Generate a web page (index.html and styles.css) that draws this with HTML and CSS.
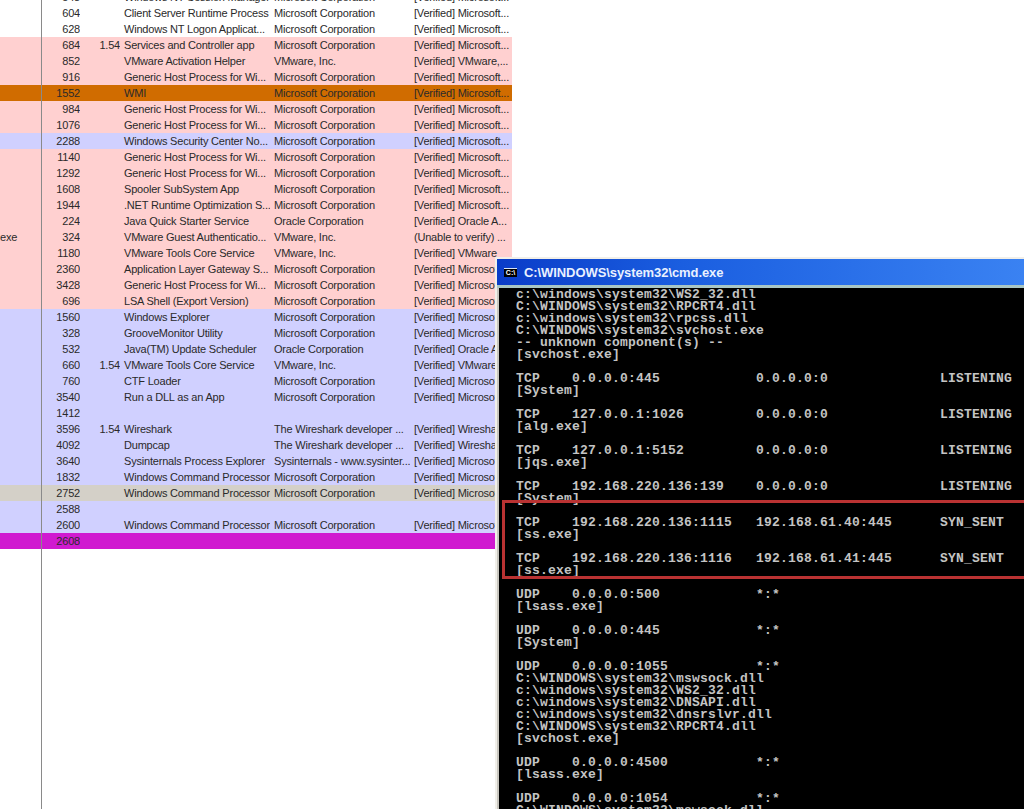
FILE: index.html
```html
<!DOCTYPE html>
<html lang="en">
<head>
<meta charset="utf-8">
<title>Process list and cmd.exe</title>
<link rel="stylesheet" href="styles.css">
</head>
<body>
<main class="desktop">
  <div class="divider"></div>
  <section class="plist">
    <div class="row"><span></span><span class="num">548</span><span class="cpu"></span><span class="cell">Windows NT Session Manager</span><span class="cell">Microsoft Corporation</span><span class="cell">[Verified] Microsoft...</span></div>
    <div class="row"><span></span><span class="num">604</span><span class="cpu"></span><span class="cell">Client Server Runtime Process</span><span class="cell">Microsoft Corporation</span><span class="cell">[Verified] Microsoft...</span></div>
    <div class="row"><span></span><span class="num">628</span><span class="cpu"></span><span class="cell">Windows NT Logon Applicat...</span><span class="cell">Microsoft Corporation</span><span class="cell">[Verified] Microsoft...</span></div>
    <div class="row pink"><span></span><span class="num">684</span><span class="cpu">1.54</span><span class="cell">Services and Controller app</span><span class="cell">Microsoft Corporation</span><span class="cell">[Verified] Microsoft...</span></div>
    <div class="row pink"><span></span><span class="num">852</span><span class="cpu"></span><span class="cell">VMware Activation Helper</span><span class="cell">VMware, Inc.</span><span class="cell">[Verified] VMware,...</span></div>
    <div class="row pink"><span></span><span class="num">916</span><span class="cpu"></span><span class="cell">Generic Host Process for Wi...</span><span class="cell">Microsoft Corporation</span><span class="cell">[Verified] Microsoft...</span></div>
    <div class="row orange"><span></span><span class="num">1552</span><span class="cpu"></span><span class="cell">WMI</span><span class="cell">Microsoft Corporation</span><span class="cell">[Verified] Microsoft...</span></div>
    <div class="row pink"><span></span><span class="num">984</span><span class="cpu"></span><span class="cell">Generic Host Process for Wi...</span><span class="cell">Microsoft Corporation</span><span class="cell">[Verified] Microsoft...</span></div>
    <div class="row pink"><span></span><span class="num">1076</span><span class="cpu"></span><span class="cell">Generic Host Process for Wi...</span><span class="cell">Microsoft Corporation</span><span class="cell">[Verified] Microsoft...</span></div>
    <div class="row blue"><span></span><span class="num">2288</span><span class="cpu"></span><span class="cell">Windows Security Center No...</span><span class="cell">Microsoft Corporation</span><span class="cell">[Verified] Microsoft...</span></div>
    <div class="row pink"><span></span><span class="num">1140</span><span class="cpu"></span><span class="cell">Generic Host Process for Wi...</span><span class="cell">Microsoft Corporation</span><span class="cell">[Verified] Microsoft...</span></div>
    <div class="row pink"><span></span><span class="num">1292</span><span class="cpu"></span><span class="cell">Generic Host Process for Wi...</span><span class="cell">Microsoft Corporation</span><span class="cell">[Verified] Microsoft...</span></div>
    <div class="row pink"><span></span><span class="num">1608</span><span class="cpu"></span><span class="cell">Spooler SubSystem App</span><span class="cell">Microsoft Corporation</span><span class="cell">[Verified] Microsoft...</span></div>
    <div class="row pink"><span></span><span class="num">1944</span><span class="cpu"></span><span class="cell">.NET Runtime Optimization S...</span><span class="cell">Microsoft Corporation</span><span class="cell">[Verified] Microsoft...</span></div>
    <div class="row pink"><span></span><span class="num">224</span><span class="cpu"></span><span class="cell">Java Quick Starter Service</span><span class="cell">Oracle Corporation</span><span class="cell">[Verified] Oracle A...</span></div>
    <div class="row pink"><span class="name">exe</span><span class="num">324</span><span class="cpu"></span><span class="cell">VMware Guest Authenticatio...</span><span class="cell">VMware, Inc.</span><span class="cell">(Unable to verify) ...</span></div>
    <div class="row pink"><span></span><span class="num">1180</span><span class="cpu"></span><span class="cell">VMware Tools Core Service</span><span class="cell">VMware, Inc.</span><span class="cell">[Verified] VMware</span></div>
    <div class="row pink"><span></span><span class="num">2360</span><span class="cpu"></span><span class="cell">Application Layer Gateway S...</span><span class="cell">Microsoft Corporation</span><span class="cell">[Verified] Microsoft...</span></div>
    <div class="row pink"><span></span><span class="num">3428</span><span class="cpu"></span><span class="cell">Generic Host Process for Wi...</span><span class="cell">Microsoft Corporation</span><span class="cell">[Verified] Microsoft...</span></div>
    <div class="row pink"><span></span><span class="num">696</span><span class="cpu"></span><span class="cell">LSA Shell (Export Version)</span><span class="cell">Microsoft Corporation</span><span class="cell">[Verified] Microsoft...</span></div>
    <div class="row blue"><span></span><span class="num">1560</span><span class="cpu"></span><span class="cell">Windows Explorer</span><span class="cell">Microsoft Corporation</span><span class="cell">[Verified] Microsoft...</span></div>
    <div class="row blue"><span></span><span class="num">328</span><span class="cpu"></span><span class="cell">GrooveMonitor Utility</span><span class="cell">Microsoft Corporation</span><span class="cell">[Verified] Microsoft...</span></div>
    <div class="row blue"><span></span><span class="num">532</span><span class="cpu"></span><span class="cell">Java(TM) Update Scheduler</span><span class="cell">Oracle Corporation</span><span class="cell">[Verified] Oracle A...</span></div>
    <div class="row blue"><span></span><span class="num">660</span><span class="cpu">1.54</span><span class="cell">VMware Tools Core Service</span><span class="cell">VMware, Inc.</span><span class="cell">[Verified] VMware</span></div>
    <div class="row blue"><span></span><span class="num">760</span><span class="cpu"></span><span class="cell">CTF Loader</span><span class="cell">Microsoft Corporation</span><span class="cell">[Verified] Microsoft...</span></div>
    <div class="row blue"><span></span><span class="num">3540</span><span class="cpu"></span><span class="cell">Run a DLL as an App</span><span class="cell">Microsoft Corporation</span><span class="cell">[Verified] Microsoft...</span></div>
    <div class="row blue"><span></span><span class="num">1412</span><span class="cpu"></span><span class="cell"></span><span class="cell"></span><span class="cell"></span></div>
    <div class="row blue"><span></span><span class="num">3596</span><span class="cpu">1.54</span><span class="cell">Wireshark</span><span class="cell">The Wireshark developer ...</span><span class="cell">[Verified] Wireshark</span></div>
    <div class="row blue"><span></span><span class="num">4092</span><span class="cpu"></span><span class="cell">Dumpcap</span><span class="cell">The Wireshark developer ...</span><span class="cell">[Verified] Wireshark</span></div>
    <div class="row blue"><span></span><span class="num">3640</span><span class="cpu"></span><span class="cell">Sysinternals Process Explorer</span><span class="cell">Sysinternals - www.sysinter...</span><span class="cell">[Verified] Microsoft...</span></div>
    <div class="row blue"><span></span><span class="num">1832</span><span class="cpu"></span><span class="cell">Windows Command Processor</span><span class="cell">Microsoft Corporation</span><span class="cell">[Verified] Microsoft...</span></div>
    <div class="row grey"><span></span><span class="num">2752</span><span class="cpu"></span><span class="cell">Windows Command Processor</span><span class="cell">Microsoft Corporation</span><span class="cell">[Verified] Microsoft...</span></div>
    <div class="row blue"><span></span><span class="num">2588</span><span class="cpu"></span><span class="cell"></span><span class="cell"></span><span class="cell"></span></div>
    <div class="row blue"><span></span><span class="num">2600</span><span class="cpu"></span><span class="cell">Windows Command Processor</span><span class="cell">Microsoft Corporation</span><span class="cell">[Verified] Microsoft...</span></div>
    <div class="row magenta"><span></span><span class="num">2608</span><span class="cpu"></span><span class="cell"></span><span class="cell"></span><span class="cell"></span></div>
  </section>

  <section class="cmd">
    <header class="cmd-title">
      <span class="cmd-icon">C:\</span>
      <span class="cmd-name">C:\WINDOWS\system32\cmd.exe</span>
    </header>
    <pre class="cmd-body">c:\windows\system32\WS2_32.dll
C:\WINDOWS\system32\RPCRT4.dll
c:\windows\system32\rpcss.dll
C:\WINDOWS\system32\svchost.exe
-- unknown component(s) --
[svchost.exe]

TCP    0.0.0.0:445            0.0.0.0:0              LISTENING
[System]

TCP    127.0.0.1:1026         0.0.0.0:0              LISTENING
[alg.exe]

TCP    127.0.0.1:5152         0.0.0.0:0              LISTENING
[jqs.exe]

TCP    192.168.220.136:139    0.0.0.0:0              LISTENING
[System]

TCP    192.168.220.136:1115   192.168.61.40:445      SYN_SENT
[ss.exe]

TCP    192.168.220.136:1116   192.168.61.41:445      SYN_SENT
[ss.exe]

UDP    0.0.0.0:500            *:*
[lsass.exe]

UDP    0.0.0.0:445            *:*
[System]

UDP    0.0.0.0:1055           *:*
C:\WINDOWS\system32\mswsock.dll
c:\windows\system32\WS2_32.dll
c:\windows\system32\DNSAPI.dll
c:\windows\system32\dnsrslvr.dll
C:\WINDOWS\system32\RPCRT4.dll
[svchost.exe]

UDP    0.0.0.0:4500           *:*
[lsass.exe]

UDP    0.0.0.0:1054           *:*
C:\WINDOWS\system32\mswsock.dll</pre>
    <div class="callout"></div>
  </section>
</main>
</body>
</html>
```
FILE: styles.css
```css
html, body {
  margin: 0;
  height: 100%;
  background: #fff;
  overflow: hidden;
}

.desktop {
  position: relative;
  height: 809px;
  overflow: hidden;
  font-family: "Liberation Sans", Arial, sans-serif;
}

.divider {
  position: absolute;
  left: 41px;
  top: 0;
  bottom: 0;
  width: 1px;
  background: #8a8a8a;
}

.plist {
  width: 512px;
  margin-top: -11px;
}

.row {
  display: grid;
  grid-template-columns: 41px 39px 40px 150px 140px 102px;
  height: 16px;
  line-height: 16px;
  font-size: 11px;
  letter-spacing: -0.2px;
  color: #2a2a2a;
  white-space: nowrap;
}

.row > span {
  overflow: hidden;
}

.row .num,
.row .cpu {
  text-align: right;
}

.row .cell {
  padding-left: 4px;
}

.pink { background: #ffd0d0; }
.blue { background: #d0d0ff; }
.orange { background: #d06c00; }
.grey { background: #d4d0c8; }
.magenta { background: #d01ad0; }

.cmd {
  position: absolute;
  left: 495px;
  top: 257px;
  right: 0;
  bottom: 0;
  overflow: hidden;
  background: #000;
  border-left: 2px solid #f1efe9;
  border-top: 2px solid #f1efe9;
}

.cmd-title {
  display: flex;
  align-items: center;
  gap: 7px;
  height: 26px;
  padding-left: 7px;
  background: linear-gradient(90deg, #0a3cc8 0%, #1a5ee0 35%, #3a82f2 100%);
  border-bottom: 3px solid #a9c6c4;
}

.cmd-icon {
  width: 13px;
  height: 8px;
  background: #000;
  border-top: 1px solid #d8e4f8;
  color: #fff;
  font-size: 7px;
  line-height: 8px;
  font-weight: 700;
  text-align: center;
  overflow: hidden;
}

.cmd-name {
  color: #e9f1ff;
  font-size: 13px;
  font-weight: 700;
  letter-spacing: -0.08px;
  white-space: nowrap;
}

.cmd-body {
  margin: 0;
  padding: 1px 0 0 17px;
  border-left: 2px solid #c8c6bf;
  font-family: "Liberation Mono", "DejaVu Sans Mono", monospace;
  font-size: 13px;
  font-weight: 700;
  letter-spacing: 0.2px;
  line-height: 12px;
  color: #c4c4c4;
}

.callout {
  position: absolute;
  left: 5px;
  top: 241px;
  width: 530px;
  height: 73px;
  border: 3px solid #b93232;
}
```
